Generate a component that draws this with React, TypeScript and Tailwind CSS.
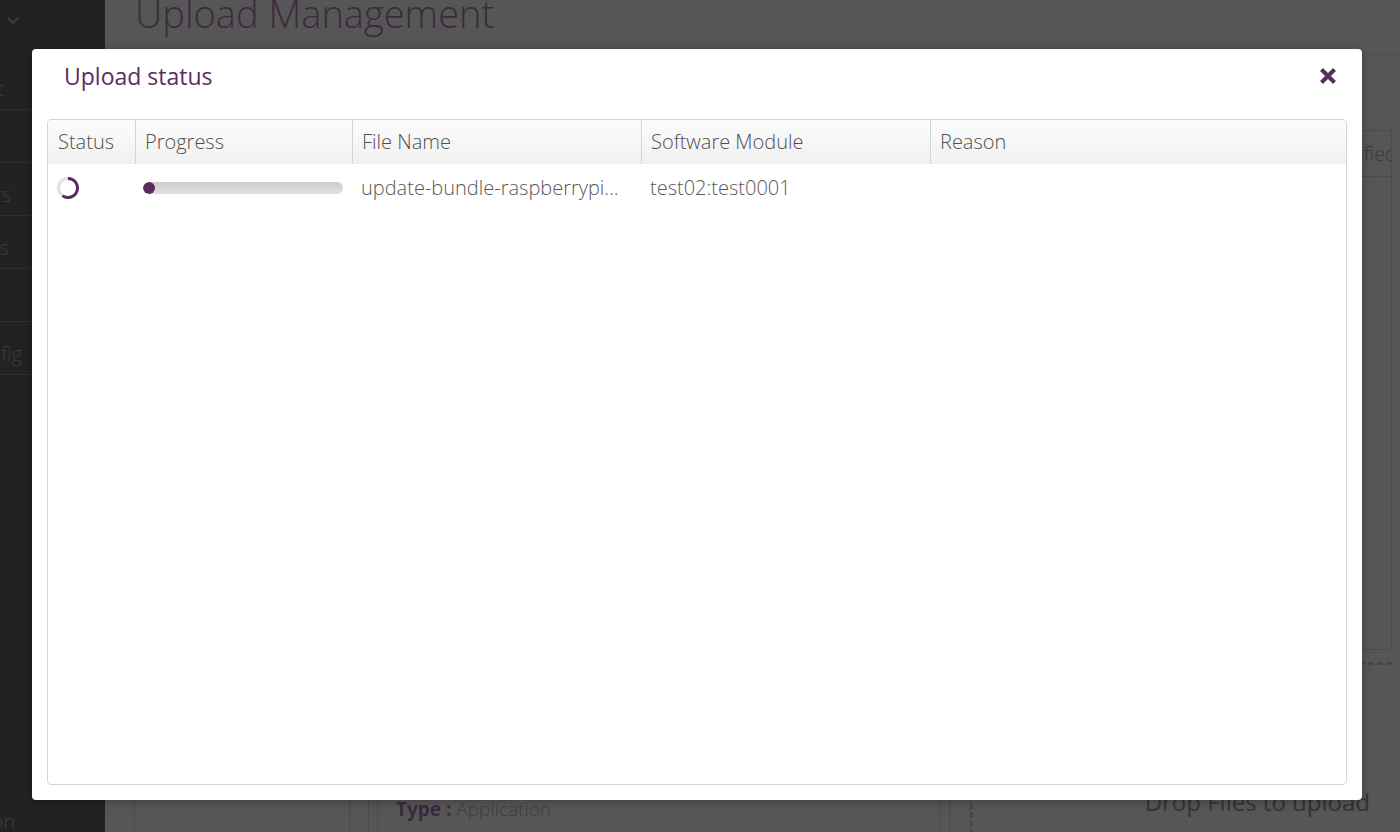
import React from "react";

function Spinner() {
  return (
    <svg width="22" height="22" viewBox="0 0 22 22">
      <circle cx="11" cy="11" r="9.5" fill="none" stroke="#e4dfe5" strokeWidth="3" />
      <path d="M11 1.5 A9.5 9.5 0 1 1 5.5 18.75" fill="none" stroke="#5a2d5f" strokeWidth="3" />
    </svg>
  );
}

function CloseIcon() {
  return (
    <svg width="18" height="18" viewBox="0 0 18 18">
      <path d="M2.5 2.5 L15.5 15.5 M15.5 2.5 L2.5 15.5" stroke="#5a2d5f" strokeWidth="4.2" strokeLinecap="butt" />
    </svg>
  );
}

function SideItem({ text, pr }: { text: string; pr: string }) {
  return (
    <div className={`h-[53px] shrink-0 border-b border-[#2e2e2e] flex items-center justify-end overflow-hidden pt-[12px] ${pr}`}>
      <span className="shrink-0 whitespace-nowrap text-[20px] font-light text-[#3d3d3d]">{text}</span>
    </div>
  );
}

export default function App() {
  return (
    <div className="relative w-[1400px] h-[832px] overflow-hidden flex bg-[#565656] font-['Open_Sans',sans-serif]">
      {/* Sidebar */}
      <aside className="w-[105px] shrink-0 bg-[#222222] flex flex-col">
        <div className="h-[57px] shrink-0 flex items-start pt-[17px] pl-[7px]">
          <svg width="12" height="8" viewBox="0 0 12 8">
            <path d="M1 1 L6 6 L11 1" fill="none" stroke="#3c3c3c" strokeWidth="2.2" />
          </svg>
        </div>
        <SideItem text="Management" pr="pr-[101px]" />
        <SideItem text="Upload" pr="pr-[140px]" />
        <SideItem text="Filters" pr="pr-[94px]" />
        <SideItem text="Rollouts" pr="pr-[96px]" />
        <SideItem text="Upload" pr="pr-[140px]" />
        <SideItem text="Config" pr="pr-[83px]" />
        <div className="flex-1 flex flex-col justify-end overflow-hidden">
          <div className="h-[22px] flex items-start justify-end pr-[90px] overflow-hidden">
            <span className="shrink-0 whitespace-nowrap text-[20px] font-light text-[#3d3d3d] leading-[24px]">Documentation</span>
          </div>
        </div>
      </aside>

      {/* Main */}
      <main className="flex-1 min-w-0 flex flex-col">
        <div className="h-[55px] shrink-0 pl-[30px] border-b border-[#4f4f4f] overflow-hidden">
          <h1 className="-mt-[7px] text-[38px] leading-[40px] font-light text-[#3b2b3d] whitespace-nowrap">Upload Management</h1>
        </div>
        <div className="flex-1 min-h-0 flex gap-[18px] pl-[29px] pt-[20px]">
          <div className="w-[216px] shrink-0 border-x border-[#4b4b4b]" />
          <div className="w-[582px] shrink-0 border-x border-[#4b4b4b] flex flex-col justify-end">
            <div className="h-[84px] shrink-0 mx-[8px] border-x border-t border-[#4b4b4b] pl-[18px] flex flex-col text-[19px] leading-[24px]">
              <div className="whitespace-nowrap"><span className="font-bold text-[#3a2a3d]">Name : </span><span className="font-light text-[#3c3c3c]">test02</span></div>
              <div className="whitespace-nowrap"><span className="font-bold text-[#3a2a3d]">Vendor : </span><span className="font-light text-[#3c3c3c]">-</span></div>
              <div className="whitespace-nowrap"><span className="font-bold text-[#3a2a3d]">Type : </span><span className="font-light text-[#3c3c3c]">Application</span></div>
            </div>
          </div>
          <div className="flex-1 min-w-0 flex flex-col ml-[2px] pr-[8px]">
            <div className="mt-[55px] h-[520px] shrink-0 border border-[#4b4b4b] flex flex-col">
              <div className="h-[46px] grid grid-cols-[168px_168px_1fr] border-b border-[#4b4b4b] text-[20px] font-light text-[#383838]">
                <div className="px-[10px] flex items-center">Name</div>
                <div className="px-[10px] flex items-center border-l border-[#4b4b4b]">Size</div>
                <div className="pl-[10px] flex items-center border-l border-[#4b4b4b] whitespace-nowrap overflow-hidden">Modified Date</div>
              </div>
            </div>
            <div className="mt-[12px] h-[200px] shrink-0 border-l-[3px] border-t-[3px] border-dashed border-[#474747] flex justify-end pr-[22px] pt-[121px]">
              <span className="text-[24px] font-normal text-[#333333] whitespace-nowrap leading-[32px]">Drop Files to upload</span>
            </div>
          </div>
        </div>
      </main>

      {/* Modal overlay */}
      <div className="absolute inset-0 pl-[32px] pt-[49px]">
        <div className="w-[1330px] h-[751px] bg-white rounded-[4px] shadow-[0_2px_10px_rgba(0,0,0,0.25)] flex flex-col">
          <div className="h-[54px] mb-[16px] shrink-0 flex items-center justify-between pl-[32px] pr-[25px]">
            <span className="text-[23px] text-[#5a2d5f] font-normal">Upload status</span>
            <CloseIcon />
          </div>
          <div className="flex-1 mx-[15px] mb-[15px] border border-[#d4d4d4] rounded-[4px] overflow-hidden flex flex-col">
            <div className="h-[44px] grid grid-cols-[87px_217px_289px_289px_1fr] bg-linear-to-b from-[#fcfcfc] to-[#f1f1f1] text-[20px] font-light text-[#505050]">
              <div className="pl-[10px] flex items-center">Status</div>
              <div className="pl-[9px] flex items-center border-l border-[#d4d4d4]">Progress</div>
              <div className="pl-[9px] flex items-center border-l border-[#d4d4d4]">File Name</div>
              <div className="pl-[9px] flex items-center border-l border-[#d4d4d4]">Software Module</div>
              <div className="pl-[9px] flex items-center border-l border-[#d4d4d4]">Reason</div>
            </div>
            <div className="h-[48px] grid grid-cols-[87px_217px_289px_289px_1fr] text-[20px] font-light text-[#595959]">
              <div className="pl-[9px] flex items-center"><Spinner /></div>
              <div className="pl-[8px] flex items-center">
                <div className="w-[200px] h-[12px] rounded-full bg-linear-to-b from-[#cdcdcd] to-[#e0e0e0] overflow-hidden">
                  <div className="w-[12px] h-full rounded-full bg-[#5a2d5f]" />
                </div>
              </div>
              <div className="pl-[9px] pr-[18px] flex items-center min-w-0">
                <span className="truncate">update-bundle-raspberrypi3.swu</span>
              </div>
              <div className="pl-[9px] flex items-center">test02:test0001</div>
              <div />
            </div>
            <div className="flex-1" />
          </div>
        </div>
      </div>
    </div>
  );
}
